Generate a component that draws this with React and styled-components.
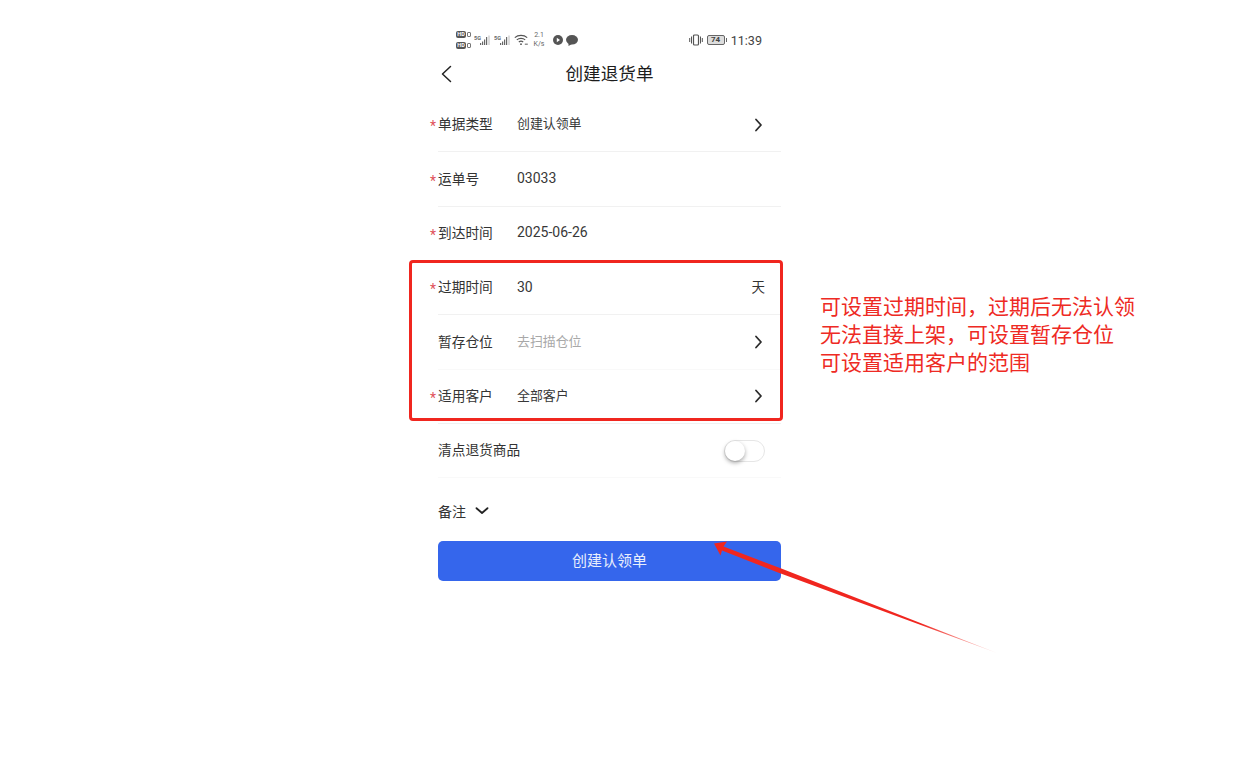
import React from "react";
import styled, { createGlobalStyle } from "styled-components";

const Global = createGlobalStyle`
  html, body { margin: 0; padding: 0; background: #fff; }
  body { font-family: Roboto, "Noto Sans CJK SC", sans-serif; color: #333; }
  * { box-sizing: border-box; }
`;

const Page = styled.div`
  position: relative;
  width: 1257px;
  height: 759px;
  overflow: hidden;
  background: #fff;
`;

const Screen = styled.main`
  width: 375px;
  margin-left: 422px;
  padding-top: 28px;
  display: flex;
  flex-direction: column;
`;

const StatusBar = styled.div`
  height: 24px;
  padding: 0 35px 0 34px;
  display: flex;
  align-items: center;
  justify-content: space-between;
  color: #555;
`;

const StatusGroup = styled.div`
  display: flex;
  align-items: center;
  gap: ${(p) => p.$gap || 4}px;
`;

const HdStack = styled.div`
  display: flex;
  flex-direction: column;
  gap: 4px;
`;

const HdLine = styled.div`
  display: flex;
  align-items: center;
  gap: 1px;
  height: 7px;
`;

const HdBadge = styled.span`
  width: 10px;
  height: 7px;
  border-radius: 2px;
  background: #555;
  color: #fff;
  font-size: 5.5px;
  line-height: 7px;
  text-align: center;
  font-weight: 700;
`;

const SimMark = styled.span`
  width: 4px;
  height: 5px;
  border: 1px solid #777;
  border-radius: 1px;
`;

const Speed = styled.div`
  font-size: 7px;
  line-height: 9px;
  text-align: center;
  color: #666;
  width: 12px;
  margin: 0 5px 0 2px;
`;

const Clock = styled.span`
  font-size: 12.6px;
  color: #444;
`;

const BatteryBody = styled.div`
  width: 18px;
  height: 10px;
  border: 1px solid #666;
  border-radius: 2px;
  background: #ddd;
  font-size: 8px;
  line-height: 8px;
  font-weight: 700;
  text-align: center;
  color: #444;
`;

const Battery = styled.div`
  display: flex;
  align-items: center;
  gap: 1px;
  &::after {
    content: "";
    width: 1px;
    height: 4px;
    background: #666;
  }
`;

const NavBar = styled.header`
  position: relative;
  height: 46px;
  display: flex;
  align-items: center;
  justify-content: center;
`;

const BackButton = styled.span`
  position: absolute;
  left: 18px;
  top: 13px;
  display: flex;
  color: #222;
`;

const Title = styled.h1`
  margin: 0 0 5px;
  font-family: "Noto Sans CJK SC", sans-serif;
  font-size: 17.6px;
  font-weight: 400;
  color: #1c1c1c;
`;

const Form = styled.section`
  margin: 0 16px;
  display: flex;
  flex-direction: column;
`;

const Row = styled.div`
  height: 54.35px;
  padding-right: 16px;
  display: flex;
  align-items: center;
  border-bottom: 1px solid ${(p) => (p.$faint ? "#f9f9f9" : "#f1f1f1")};
`;

const Star = styled.span`
  width: 8px;
  margin-left: -8px;
  color: #e0525a;
  font-size: 14px;
  line-height: 1;
  padding-top: 3px;
`;

const Label = styled.label`
  width: ${(p) => (p.$wide ? "auto" : "79px")};
  flex: ${(p) => (p.$wide ? 1 : "none")};
  padding-bottom: 3px;
  font-family: "Noto Sans CJK SC", sans-serif;
  font-size: 13.7px;
  color: #333;
`;

const Value = styled.span`
  flex: 1;
  padding-bottom: ${(p) => (p.$num ? 2 : 4)}px;
  font-family: Roboto, "Noto Sans CJK SC", sans-serif;
  font-size: ${(p) => (p.$num ? 14 : 12.9)}px;
  color: ${(p) => (p.$placeholder ? "#a8a8a8" : "#383838")};
`;

const Unit = styled.span`
  padding-bottom: 3px;
  font-family: "Noto Sans CJK SC", sans-serif;
  font-size: 13.5px;
  color: #333;
`;

const ChevronBox = styled.span`
  display: flex;
  margin-right: 2px;
  color: #2b2b2b;
`;

const Toggle = styled.div`
  position: relative;
  width: 41px;
  height: 22px;
  border: 1px solid #e6e6e6;
  border-radius: 11px;
  background: #fff;
`;

const Knob = styled.span`
  position: absolute;
  left: 0;
  top: 0;
  width: 20px;
  height: 20px;
  border-radius: 50%;
  background: #fff;
  box-shadow: 0 2px 4px rgba(0, 0, 0, 0.35);
`;

const RemarkRow = styled.div`
  height: 63px;
  padding-top: 3px;
  display: flex;
  align-items: center;
  gap: 9px;
  font-family: "Noto Sans CJK SC", sans-serif;
  font-size: 14px;
  color: #333;
`;

const SubmitButton = styled.button`
  width: 343px;
  height: 40px;
  border: none;
  border-radius: 5px;
  background: #3566ec;
  color: #e8eefc;
  font-family: "Noto Sans CJK SC", sans-serif;
  font-size: 15px;
  padding: 0 0 3px;
`;

const Highlight = styled.div`
  position: absolute;
  left: 408.5px;
  top: 260px;
  width: 374px;
  height: 160.5px;
  border: 3px solid #f0261f;
  border-radius: 4px;
  pointer-events: none;
`;

const Note = styled.div`
  position: absolute;
  left: 820px;
  top: 291px;
  font-family: "Noto Sans CJK SC", sans-serif;
  font-size: 21px;
  line-height: 28px;
  font-weight: 400;
  color: #ee2a24;
  white-space: pre;
`;

const ArrowSvg = styled.svg`
  position: absolute;
  left: 0;
  top: 0;
  pointer-events: none;
`;

const Chevron = () => (
  <ChevronBox>
    <svg width="9" height="14" viewBox="0 0 9 14" fill="none" stroke="currentColor" strokeWidth="1.8" strokeLinecap="round" strokeLinejoin="round">
      <path d="M2 1.5 L7 7 L2 12.5" />
    </svg>
  </ChevronBox>
);

const Signal = () => (
  <svg width="17" height="12" viewBox="0 0 17 12" fill="#666">
    <text x="0" y="6" fontSize="5.5" fontWeight="700" fontFamily="Roboto">5G</text>
    <rect x="6" y="9" width="1.2" height="2" />
    <rect x="8" y="7.5" width="1.2" height="3.5" />
    <rect x="10" y="5.5" width="1.2" height="5.5" />
    <rect x="12" y="3" width="1.2" height="8" />
    <rect x="14.5" y="1.5" width="1" height="9.5" fill="#bbb" />
  </svg>
);

const Wifi = () => (
  <svg width="14" height="12" viewBox="0 0 14 12" fill="none" stroke="#555" strokeWidth="1.1">
    <path d="M0.8 3.6 C4.2 0.6 9.8 0.6 13.2 3.6" />
    <path d="M2.8 5.8 C5 3.9 9 3.9 11.2 5.8" />
    <path d="M4.8 8 C6 7 8 7 9.2 8" />
    <circle cx="7" cy="10.2" r="0.9" fill="#555" stroke="none" />
    <rect x="10.8" y="9.6" width="3" height="1.2" fill="#777" stroke="none" />
  </svg>
);

const PlayBadge = () => (
  <svg width="10" height="10" viewBox="0 0 10 10">
    <circle cx="5" cy="5" r="5" fill="#555" />
    <path d="M3.8 2.8 L7 5 L3.8 7.2 Z" fill="#fff" />
  </svg>
);

const Bubble = () => (
  <svg width="12" height="11" viewBox="0 0 12 11" fill="#555">
    <ellipse cx="6" cy="4.8" rx="6" ry="4.8" />
    <path d="M2.5 7.5 L2.5 11 L6 9 Z" />
  </svg>
);

const Vibrate = () => (
  <svg width="14" height="12" viewBox="0 0 14 12" fill="none" stroke="#555" strokeWidth="1">
    <rect x="4.5" y="1" width="5" height="10" rx="1" strokeWidth="1.2" />
    <path d="M2.5 2.5 V9.5 M0.7 4 V8 M11.5 2.5 V9.5 M13.3 4 V8" />
  </svg>
);

const HdRow = () => (
  <HdLine>
    <HdBadge>HD</HdBadge>
    <SimMark />
  </HdLine>
);

const Field = ({ label, required, value, num, placeholder, chevron, unit, faint }) => (
  <Row $faint={faint}>
    {required && <Star>*</Star>}
    <Label>{label}</Label>
    <Value $num={num} $placeholder={placeholder}>{value}</Value>
    {unit && <Unit>{unit}</Unit>}
    {chevron && <Chevron />}
  </Row>
);

export default function App() {
  return (
    <Page>
      <Global />
      <Screen>
        <StatusBar>
          <StatusGroup $gap={3}>
            <HdStack>
              <HdRow />
              <HdRow />
            </HdStack>
            <Signal />
            <Signal />
            <Wifi />
            <Speed>2.1<br />K/s</Speed>
            <PlayBadge />
            <Bubble />
          </StatusGroup>
          <StatusGroup>
            <Vibrate />
            <Battery>
              <BatteryBody>74</BatteryBody>
            </Battery>
            <Clock>11:39</Clock>
          </StatusGroup>
        </StatusBar>
        <NavBar>
          <BackButton>
            <svg width="13" height="18" viewBox="0 0 13 18" fill="none" stroke="currentColor" strokeWidth="1.5" strokeLinecap="round" strokeLinejoin="round">
              <path d="M10.5 1.5 L2.5 9 L10.5 16.5" />
            </svg>
          </BackButton>
          <Title>创建退货单</Title>
        </NavBar>
        <Form>
          <Field required label="单据类型" value="创建认领单" chevron />
          <Field required label="运单号" value="03033" num />
          <Field required label="到达时间" value="2025-06-26" num />
          <Field required label="过期时间" value="30" num unit="天" />
          <Field label="暂存仓位" value="去扫描仓位" placeholder chevron faint />
          <Field required label="适用客户" value="全部客户" chevron />
          <Row $faint>
            <Label $wide>清点退货商品</Label>
            <Toggle>
              <Knob />
            </Toggle>
          </Row>
          <RemarkRow>
            备注
            <svg width="14" height="8" viewBox="0 0 14 8" fill="none" stroke="#222" strokeWidth="1.8" strokeLinecap="round" strokeLinejoin="round">
              <path d="M1.5 1.2 L7 6 L12.5 1.2" />
            </svg>
          </RemarkRow>
          <SubmitButton>创建认领单</SubmitButton>
        </Form>
      </Screen>
      <Highlight />
      <Note>{"可设置过期时间，过期后无法认领\n无法直接上架，可设置暂存仓位\n可设置适用客户的范围"}</Note>
      <ArrowSvg width="1257" height="759" viewBox="0 0 1257 759">
        <defs>
          <linearGradient id="tail" gradientUnits="userSpaceOnUse" x1="920" y1="623" x2="997" y2="653">
            <stop offset="0" stopColor="#f0261f" />
            <stop offset="1" stopColor="#f0261f" stopOpacity="0.15" />
          </linearGradient>
        </defs>
        <path d="M714 543.5 L727 541.5 L723.5 546.5 L780 568 L997 653 L778 572.5 L722 550.5 L720.5 555.5 Z" fill="url(#tail)" />
      </ArrowSvg>
    </Page>
  );
}
